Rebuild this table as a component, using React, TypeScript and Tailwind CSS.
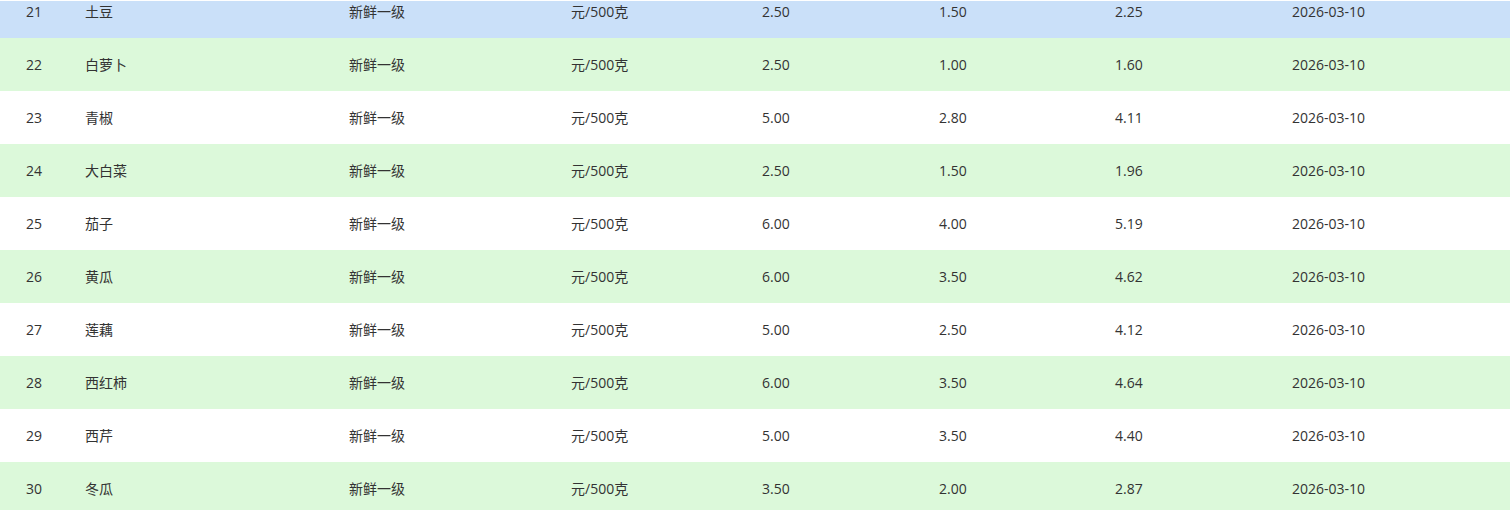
const rows = [
  ["21", "土豆", "新鲜一级", "元/500克", "2.50", "1.50", "2.25", "2026-03-10"],
  ["22", "白萝卜", "新鲜一级", "元/500克", "2.50", "1.00", "1.60", "2026-03-10"],
  ["23", "青椒", "新鲜一级", "元/500克", "5.00", "2.80", "4.11", "2026-03-10"],
  ["24", "大白菜", "新鲜一级", "元/500克", "2.50", "1.50", "1.96", "2026-03-10"],
  ["25", "茄子", "新鲜一级", "元/500克", "6.00", "4.00", "5.19", "2026-03-10"],
  ["26", "黄瓜", "新鲜一级", "元/500克", "6.00", "3.50", "4.62", "2026-03-10"],
  ["27", "莲藕", "新鲜一级", "元/500克", "5.00", "2.50", "4.12", "2026-03-10"],
  ["28", "西红柿", "新鲜一级", "元/500克", "6.00", "3.50", "4.64", "2026-03-10"],
  ["29", "西芹", "新鲜一级", "元/500克", "5.00", "3.50", "4.40", "2026-03-10"],
  ["30", "冬瓜", "新鲜一级", "元/500克", "3.50", "2.00", "2.87", "2026-03-10"],
];

export default function App() {
  return (
    <div className="w-[1510px] h-[510px] overflow-hidden bg-white pt-px text-[14px] text-[#333] font-['Open_Sans','Noto_Sans_CJK_SC',sans-serif]">
      <div className="h-[509px] overflow-hidden">
        <div className="-mt-[16px]">
          {rows.map((r, i) => (
            <div
              key={r[0]}
              className={
                "grid grid-cols-[85px_264px_222px_191px_177px_176px_177px_218px] h-[53px] items-center " +
                (i === 0 ? "bg-[#cae0f9]" : i % 2 === 1 ? "bg-[#dcf9da]" : "bg-white")
              }
            >
              <span className="pl-[26px]">{r[0]}</span>
              {r.slice(1).map((c, j) => (
                <span key={j}>{c}</span>
              ))}
            </div>
          ))}
        </div>
      </div>
    </div>
  );
}
